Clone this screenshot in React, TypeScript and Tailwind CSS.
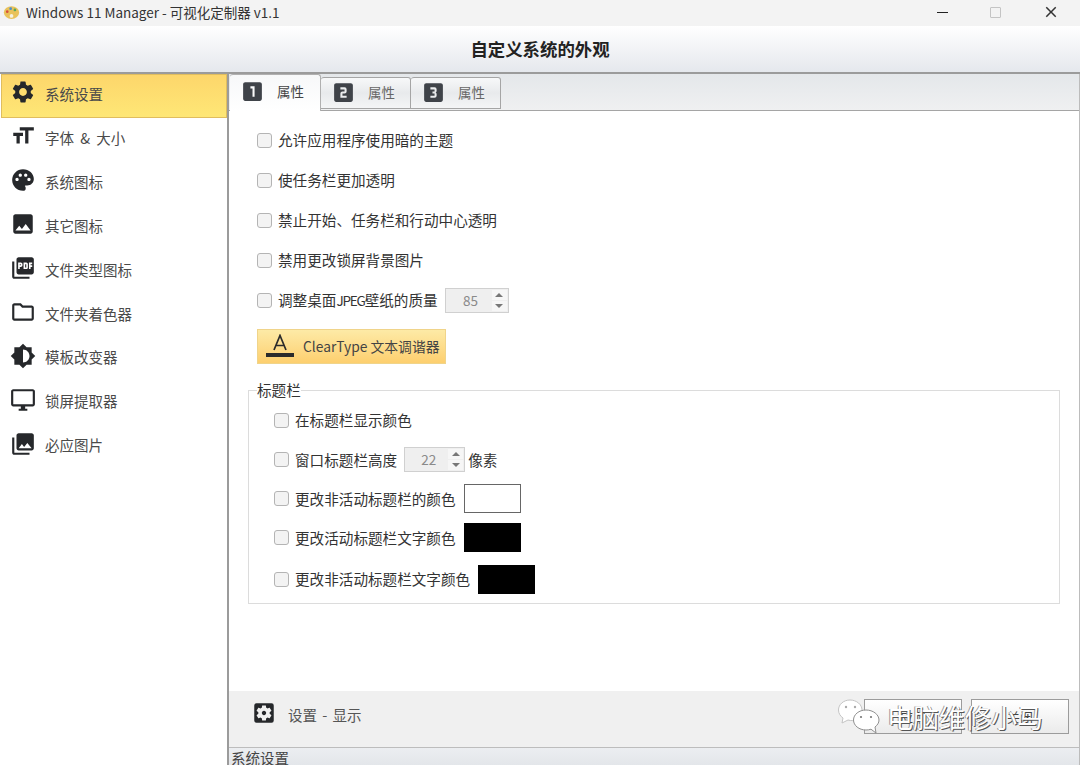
import {
  MdBrightnessMedium,
  MdClose,
  MdCollections,
  MdFormatSize,
  MdImage,
  MdLooks3,
  MdLooksOne,
  MdLooksTwo,
  MdOutlineFolder,
  MdOutlineDesktopWindows,
  MdPalette,
  MdPictureAsPdf,
  MdSettings,
  MdSettingsApplications,
} from "react-icons/md";

const cjk = "font-['Noto_Sans_CJK_SC','Noto_Sans',sans-serif]";

const navItems = [
  { label: "系统设置", Icon: MdSettings },
  { label: "字体 & 大小", Icon: MdFormatSize },
  { label: "系统图标", Icon: MdPalette },
  { label: "其它图标", Icon: MdImage },
  { label: "文件类型图标", Icon: MdPictureAsPdf },
  { label: "文件夹着色器", Icon: MdOutlineFolder },
  { label: "模板改变器", Icon: MdBrightnessMedium },
  { label: "锁屏提取器", Icon: MdOutlineDesktopWindows },
  { label: "必应图片", Icon: MdCollections },
];

function Check() {
  return <span className="h-[15px] w-[15px] shrink-0 rounded-[3px] border border-[#b4b4b4] bg-[#f3f3f3]" />;
}

function Spin({ value, wide }: { value: string; wide?: boolean }) {
  return (
    <div className={`ml-[1px] flex h-[25px] ${wide ? "w-[64px]" : "w-[61px]"} items-center border border-[#d0d0d0] bg-[#efefef] pr-[1px]`}>
      <span className="flex-1 pl-1 text-center text-[13.5px] text-[#8a8a8a]">{value}</span>
      <div className="flex w-[15px] flex-col items-center gap-[1px]">
        <span className="flex h-[10px] w-full items-center justify-center bg-[#f6f6f6]">
          <span className="h-0 w-0 border-x-[4px] border-b-[4px] border-x-transparent border-b-[#777]" />
        </span>
        <span className="flex h-[10px] w-full items-center justify-center bg-[#f6f6f6]">
          <span className="h-0 w-0 border-x-[4px] border-t-[4px] border-x-transparent border-t-[#777]" />
        </span>
      </div>
    </div>
  );
}

function Tab({ Icon, active }: { Icon: typeof MdLooksOne; active?: boolean }) {
  return (
    <div
      className={
        active
          ? "z-10 -mb-[1px] flex h-[37px] w-[91px] items-center rounded-t-[3px] border-r border-t border-[#b0b0b0] bg-gradient-to-b from-[#f7f8f9] to-white pb-[3px] pl-[10px]"
          : "mb-[1px] flex h-[32px] w-[90px] items-center rounded-t-[3px] border border-l-0 border-[#a5a5a5] bg-gradient-to-b from-[#f7f8f9] via-[#e8eaec] to-[#f4f5f6] pb-[2px] pl-[10px]"
      }
    >
      <Icon className="h-[25px] w-[25px] text-[#3f4349]" />
      <span className={active ? "ml-[12px] text-[13.5px] text-[#444]" : "ml-[12px] text-[13.5px] text-[#666]"}>属性</span>
    </div>
  );
}

export default function App() {
  return (
    <div className={`relative flex h-[765px] w-[1080px] flex-col overflow-hidden bg-white text-[#3c3c3c] ${cjk}`}>
      {/* Title bar */}
      <div className="flex h-[26px] items-center bg-[#f3f3f3] pb-[2px] pl-[3px]">
        <svg viewBox="0 0 20 20" className="h-[17px] w-[17px]">
          <ellipse cx="10" cy="10" rx="9" ry="7.5" fill="#e9c25a" />
          <circle cx="5" cy="9" r="1.6" fill="#d8503c" />
          <circle cx="9" cy="5.5" r="1.6" fill="#4f8fd0" />
          <circle cx="14" cy="7" r="1.6" fill="#5aa85a" />
          <circle cx="10" cy="14" r="2.2" fill="#f6f1e0" />
        </svg>
        <span className="ml-[6px] text-[13.5px] text-[#333]">Windows 11 Manager - 可视化定制器 v1.1</span>
        <div className="ml-auto flex items-center pr-[20px]">
          <span className="mr-[42px] h-[1px] w-[11px] bg-[#222]" />
          <span className="mr-[41px] h-[11px] w-[11px] rounded-[1px] border border-[#c4c4c4]" />
          <MdClose className="h-[18px] w-[18px] text-[#333]" />
        </div>
      </div>

      {/* Header */}
      <div className="flex h-[46px] items-center justify-center bg-gradient-to-b from-white to-[#e5e8ed] text-[17.4px] font-bold text-[#222]">
        自定义系统的外观
      </div>
      <div className="h-[2px] bg-[#9b9b9b]" />

      <div className="flex min-h-0 flex-1">
        {/* Sidebar */}
        <div className="w-[227px] shrink-0">
          {navItems.map(({ label, Icon }, i) => (
            <div
              key={label}
              className={
                i === 0
                  ? "ml-[1px] flex h-[43.9px] items-center border border-[#e0bd5e] bg-gradient-to-b from-[#fdd66b] to-[#fee776] pb-[4px] pl-[8px]"
                  : "flex h-[43.9px] items-center pb-[4px] pl-[10px]"
              }
            >
              <Icon className="-mt-[3px] h-[26px] w-[26px] shrink-0 text-[#26282b]" />
              <span className="ml-[9px] text-[14.5px] text-[#4a4a4a] [word-spacing:3px]">{label}</span>
            </div>
          ))}
        </div>
        <div className="w-[2px] bg-[#9b9b9b]" />

        {/* Main panel */}
        <div className="flex min-w-0 flex-1 flex-col border-r border-[#bcbcbc]">
          <div className="flex h-[37px] shrink-0 items-end border-b border-[#a5a5a5] bg-gradient-to-b from-[#e4e7ea] to-[#eff0f1] pl-[1px]">
            <Tab Icon={MdLooksOne} active />
            <Tab Icon={MdLooksTwo} />
            <Tab Icon={MdLooks3} />
          </div>

          <div className="flex-1 pl-[28px] pr-[19px] pt-[9px] text-[14.6px] text-[#333]">
            <div className="flex h-[40px] items-center gap-[6px]">
              <Check />
              允许应用程序使用暗的主题
            </div>
            <div className="flex h-[40px] items-center gap-[6px]">
              <Check />
              使任务栏更加透明
            </div>
            <div className="flex h-[40px] items-center gap-[6px]">
              <Check />
              禁止开始、任务栏和行动中心透明
            </div>
            <div className="flex h-[40px] items-center gap-[6px]">
              <Check />
              禁用更改锁屏背景图片
            </div>
            <div className="flex h-[40px] items-center gap-[6px]">
              <Check />
              <span>
                调整桌面<span className="text-[13.5px] tracking-[-1.2px]">JPEG</span>壁纸的质量
              </span>
              <Spin value="85" wide />
            </div>

            <button className="mt-[9px] flex h-[35px] w-[189px] items-center border border-[#f0d48a] bg-gradient-to-b from-[#fdeaa6] to-[#fdcf6e] pb-[1px] pl-[8px] text-[13.8px] text-[#444]">
              <svg viewBox="0 0 28 24" className="h-[24px] w-[28px]" fill="none">
                <path d="M8 16 L14 1.5 L20 16 M10 11.5 H18" stroke="#2b2b2b" strokeWidth="1.7" />
                <rect x="0" y="19" width="28" height="4" fill="#2b2b2b" />
              </svg>
              <span className="ml-[9px]">ClearType 文本调谐器</span>
            </button>

            <fieldset className="-ml-[9px] mt-[17px] h-[223px] border border-[#dcdcdc] text-[#333]">
              <legend className="ml-[8px] leading-[18px]">标题栏</legend>
              <div className="pl-[25px] pt-[1px]">
                <div className="flex h-[40px] items-center gap-[6px]">
                  <Check />
                  在标题栏显示颜色
                </div>
                <div className="flex h-[39px] items-center gap-[6px]">
                  <Check />
                  窗口标题栏高度
                  <Spin value="22" />
                  <span className="-ml-[3px]">像素</span>
                </div>
                <div className="flex h-[39px] items-center gap-[8px]">
                  <Check />
                  <span className="-ml-[2px]">更改非活动标题栏的颜色</span>
                  <span className="h-[29px] w-[57px] border border-[#666] bg-white" />
                </div>
                <div className="flex h-[39px] items-center gap-[8px]">
                  <Check />
                  <span className="-ml-[2px]">更改活动标题栏文字颜色</span>
                  <span className="h-[29px] w-[57px] bg-black" />
                </div>
                <div className="mt-[2px] flex h-[40px] items-center gap-[8px]">
                  <Check />
                  <span className="-ml-[2px]">更改非活动标题栏文字颜色</span>
                  <span className="h-[29px] w-[57px] bg-black" />
                </div>
              </div>
            </fieldset>
          </div>

          {/* Footer */}
          <div className="flex h-[56px] shrink-0 items-center bg-[#f0f0f0] pb-[8px] pl-[22px] pr-[10px]">
            <MdSettingsApplications className="-mt-[4px] h-[26px] w-[26px] text-[#26282b]" />
            <span className="ml-[11px] text-[14.5px] text-[#555] [word-spacing:2px]">设置 - 显示</span>
            <div className="ml-auto mt-[3px] flex gap-[9px]">
              <button className="h-[35px] w-[98px] border border-[#9c9c9c] bg-gradient-to-b from-white to-[#ebebeb] text-[13px] text-[#444]">应用</button>
              <button className="h-[35px] w-[98px] border border-[#9c9c9c] bg-gradient-to-b from-white to-[#ebebeb] text-[13px] text-[#444]">关闭</button>
            </div>
          </div>
          <div className="flex h-[18px] shrink-0 items-start border-t border-[#bdbdbd] bg-gradient-to-b from-[#eceef1] to-[#e3e6ea] pl-[2px] text-[14.5px] leading-[19px] text-[#444]">
            系统设置
          </div>
        </div>
      </div>

      {/* Watermark */}
      <div className="absolute left-[838px] top-[699px] flex items-center">
        <svg viewBox="0 0 42 36" className="h-[36px] w-[42px]">
          <path d="M12 1 C5.5 1 .5 5.5 .5 11 C.5 14.5 2.5 17.3 5 19 L4 24 L10 21 C16 23 24 20 24 11 C24 5.5 18.5 1 12 1Z" fill="#fff" stroke="#c4c4c4" />
          <path d="M28 11 C21 11 15.5 15.5 15.5 21 C15.5 26.5 21 31 28 31 C30 31 31 30.8 33 30.2 L38 34 L37 28 C39.5 26 41 23.8 41 21 C41 15.5 35 11 28 11Z" fill="#fff" stroke="#8f8f8f" />
          <circle cx="8" cy="8" r="1.2" fill="#aaa" />
          <circle cx="17" cy="8" r="1.2" fill="#aaa" />
          <circle cx="23" cy="18" r="1.1" fill="#777" />
          <circle cx="33" cy="18" r="1.1" fill="#777" />
        </svg>
        <span className="ml-[7px] text-[26px] leading-none text-white [text-shadow:1px_1px_0_#555,-1px_0_0_#999]">电脑维修小马</span>
      </div>
    </div>
  );
}
